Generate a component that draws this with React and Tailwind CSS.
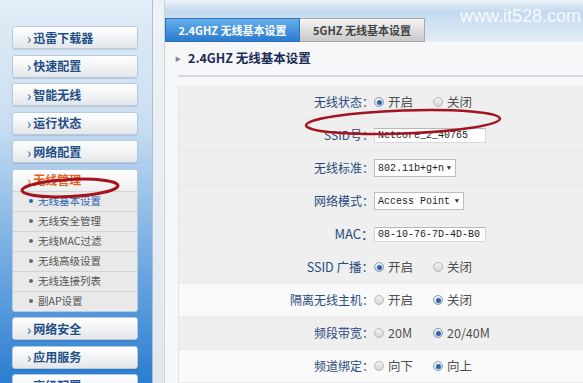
import React from 'react';

const CJK = "font-['Noto_Sans_CJK_SC','Noto_Sans',sans-serif]";

const MENU_TOP = ['迅雷下载器', '快速配置', '智能无线', '运行状态', '网络配置'];
const MENU_BOTTOM = ['网络安全', '应用服务', '高级配置'];
const SUB_ITEMS = ['无线基本设置', '无线安全管理', '无线MAC过滤', '无线高级设置', '无线连接列表', '副AP设置'];

function MenuButton({ label }) {
  return (
    <div className="flex h-[23px] shrink-0 items-center rounded-[3px] border border-[#b7cbe0] bg-gradient-to-b from-white to-[#e4e7ea] pl-[14px] text-[12px] font-bold text-[#1f4f88] shadow-[0_1px_1px_rgba(0,0,0,0.12)]">
      <span className="mr-[2px] text-[14px] font-normal leading-none">›</span>
      {label}
    </div>
  );
}

function Radio({ checked }) {
  return (
    <span
      className={`grid h-[10px] w-[10px] shrink-0 place-items-center rounded-full border bg-gradient-to-b from-[#f4f4f4] to-[#d6d6d6] ${
        checked ? 'border-[#7f9cc0]' : 'border-[#b8b8b8]'
      }`}
    >
      {checked && <span className="h-[5px] w-[5px] rounded-full bg-[#2d64b0]" />}
    </span>
  );
}

function RadioGroup({ options, value }) {
  return (
    <div className="flex items-center text-[12.5px] text-[#505050]">
      {options.map((o, i) => (
        <div key={o} className={`flex items-center gap-[4px] ${i === 0 ? 'w-[59px]' : ''}`}>
          <Radio checked={i === value} />
          <span>{o}</span>
        </div>
      ))}
    </div>
  );
}

function Row({ label, bg = 'bg-[#efefef]', children }) {
  return (
    <div className={`flex h-[33px] items-center border-b border-[#e9e9e9] ${bg}`}>
      <div className="w-[195px] shrink-0 text-right text-[12px] text-[#2a4a7e]">{label}</div>
      {children}
    </div>
  );
}

function TextBox({ value }) {
  return (
    <div className="flex h-[15px] w-[112px] items-center border border-[#d8d8d8] border-t-[#b8b8b8] bg-white pl-[3px] font-['Liberation_Mono',monospace] text-[10px] text-[#222]">
      {value}
    </div>
  );
}

function SelectBox({ value, width }) {
  return (
    <div
      className={`flex h-[18px] items-center justify-between border border-[#bdbdbd] bg-white pl-[3px] pr-[4px] font-['Liberation_Mono',monospace] text-[10px] text-[#222] ${width}`}
    >
      <span>{value}</span>
      <span className="text-[7px] text-[#333]">▼</span>
    </div>
  );
}

export default function App() {
  return (
    <div className={`relative flex h-[383px] w-[583px] overflow-hidden ${CJK}`}>
      {/* Sidebar */}
      <aside className="flex w-[152px] shrink-0 flex-col gap-[5.5px] bg-[linear-gradient(to_bottom,#e2edf7_0%,#cadef1_32%,#80b3e4_62%,#2a7dd0_100%)] pl-[12px] pr-[14px] pt-[26px]">
        {MENU_TOP.map((m) => (
          <MenuButton key={m} label={m} />
        ))}
        <div className="shrink-0 overflow-hidden rounded-[3px] border border-[#b7cbe0] bg-[#e9e9e9]">
          <div className="flex h-[21px] items-center bg-gradient-to-b from-white to-[#eeeeee] pl-[14px] text-[12px] font-bold text-[#e8601e]">
            <span className="mr-[2px] text-[14px] font-normal leading-none">›</span>
            无线管理
          </div>
          {SUB_ITEMS.map((s, i) => (
            <div
              key={s}
              className={`flex h-[20px] items-center border-t border-[#d3d3d3] pl-[16px] text-[10.5px] ${
                i === 0 ? 'text-[#2d63b4]' : 'text-[#555]'
              }`}
            >
              <span className={`mr-[5px] h-[4px] w-[4px] rounded-full ${i === 0 ? 'bg-[#2d63b4]' : 'bg-[#666]'}`} />
              {s}
            </div>
          ))}
        </div>
        {MENU_BOTTOM.map((m) => (
          <MenuButton key={m} label={m} />
        ))}
      </aside>

      {/* Divider strip */}
      <div className="w-[13px] shrink-0 border-l border-r border-l-[#a9c0d6] border-r-[#c9d3dc] bg-[linear-gradient(to_bottom,#eef3f8,#e1e7ec)]" />

      {/* Main */}
      <main className="flex min-w-0 flex-1 flex-col bg-[#f6f7f8]">
        <div className="flex h-[42px] shrink-0 items-end bg-[linear-gradient(to_bottom,#edf3f9_0%,#c4daef_28%,#d7e6f3_75%,#e6eef6_100%)]">
          <div className="flex h-[24px] w-[135px] items-center justify-center border border-[#2f72bc] bg-gradient-to-b from-[#63aeea] to-[#2b7bd0] text-[11px] font-bold text-white">
            2.4GHZ 无线基本设置
          </div>
          <div className="flex h-[24px] w-[125px] items-center justify-center border border-l-0 border-[#a9a9a9] bg-gradient-to-b from-[#f4f4f4] to-[#c9c9c9] text-[11px] font-bold text-[#444]">
            5GHZ 无线基本设置
          </div>
        </div>

        <div className="flex h-[33px] shrink-0 items-center pl-[10px] text-[12.5px] font-bold text-[#1c2b58]">
          <span className="mr-[7px] text-[6px] font-normal text-[#888]">▶</span>
          2.4GHZ 无线基本设置
        </div>
        <div className="ml-[13px] h-[2px] shrink-0 bg-[#d3d9de]" />

        <div className="ml-[13px] mt-[9px] flex flex-col border-l border-[#e4e4e4]">
          <Row label="无线状态：">
            <RadioGroup options={['开启', '关闭']} value={0} />
          </Row>
          <Row label="SSID号：">
            <TextBox value="Netcore_2_40765" />
          </Row>
          <Row label="无线标准：">
            <SelectBox value="802.11b+g+n" width="w-[82px]" />
          </Row>
          <Row label="网络模式：">
            <SelectBox value="Access Point" width="w-[90px]" />
          </Row>
          <Row label={<span className="text-[13px]">MAC：</span>}>
            <TextBox value="08-10-76-7D-4D-B0" />
          </Row>
          <Row label={<span className="text-[12.5px]">SSID 广播：</span>}>
            <RadioGroup options={['开启', '关闭']} value={0} />
          </Row>
          <Row label="隔离无线主机：" bg="bg-[#f9f9f9]">
            <RadioGroup options={['开启', '关闭']} value={1} />
          </Row>
          <Row label="频段带宽：">
            <RadioGroup options={['20M', '20/40M']} value={1} />
          </Row>
          <Row label="频道绑定：" bg="bg-[#f9f9f9]">
            <RadioGroup options={['向下', '向上']} value={1} />
          </Row>
        </div>
      </main>

      {/* Watermark */}
      <div className="pointer-events-none absolute right-[2px] top-[3px] font-['Liberation_Sans',sans-serif] text-[18px] text-white/85">
        www.it528.com
      </div>

      {/* Red annotation ellipses */}
      <svg className="pointer-events-none absolute left-0 top-0" width="583" height="383" viewBox="0 0 583 383">
        <ellipse cx="403" cy="122" rx="97" ry="11.5" fill="none" stroke="#a3141e" strokeWidth="2.5" transform="rotate(-2 403 122)" />
        <ellipse cx="70" cy="188" rx="48" ry="8.5" fill="none" stroke="#a3141e" strokeWidth="3" transform="rotate(-3 70 188)" />
      </svg>
    </div>
  );
}
